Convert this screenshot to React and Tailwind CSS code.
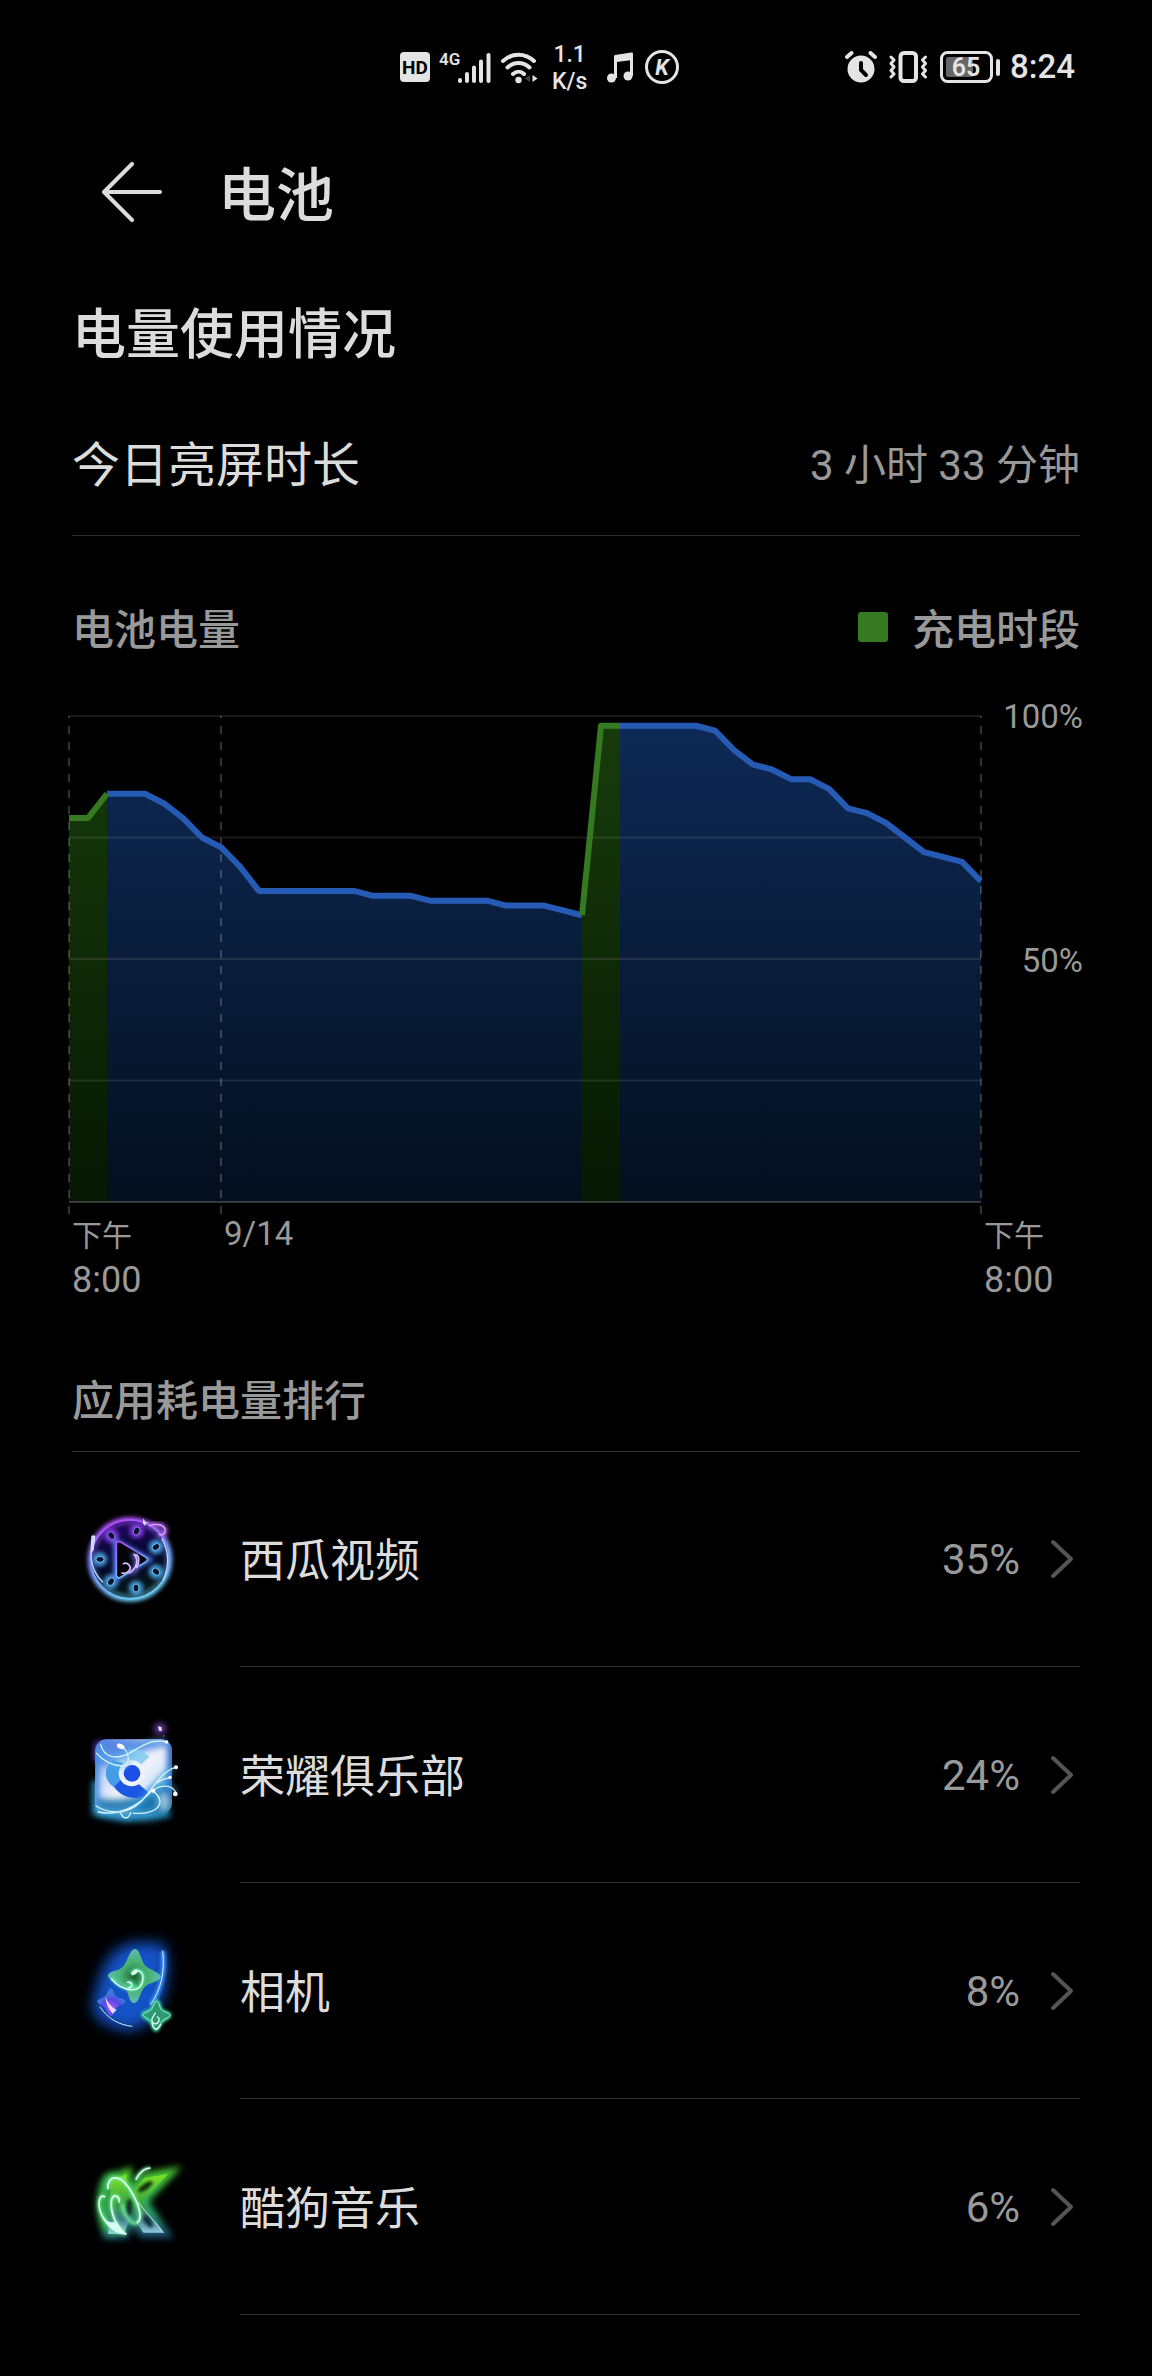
import { useId } from 'react'

// Battery level sampled every 30 minutes, 8pm to 8pm
const levels = [
  79, 79, 84, 84, 84, 82, 79, 75, 73, 69, 64, 64, 64, 64, 64, 64, 63, 63, 63, 62, 62, 62, 62, 61, 61, 61, 60, 59,
  98, 98, 98, 98, 98, 98, 97, 93, 90, 89, 87, 87, 85, 81, 80, 78, 75, 72, 71, 70, 66
]

const segments = [
  { from: 2, to: 27, charging: false },
  { from: 29, to: 48, charging: false },
  { from: 0, to: 2, charging: true },
  { from: 27, to: 29, charging: true }
]

const STEP = 19
const PLOT_HEIGHT = 486

const px = (i) => 1 + i * STEP
const py = (level) => 1 + ((100 - level) * PLOT_HEIGHT) / 100

function linePoints({ from, to }) {
  return levels
    .slice(from, to + 1)
    .map((level, i) => `${px(from + i)},${py(level)}`)
    .join(' ')
}

function areaPoints(segment) {
  return `${px(segment.from)},${py(0)} ${linePoints(segment)} ${px(segment.to)},${py(0)}`
}

function BatteryChart() {
  return (
    <svg viewBox="0 0 914 499" className="block w-full" role="img" aria-label="电池电量">
      <defs>
        <linearGradient id="usage" gradientUnits="userSpaceOnUse" x1="0" y1="0" x2="0" y2="487">
          <stop offset="0" stopColor="#0e2a57" />
          <stop offset="1" stopColor="#040f1e" />
        </linearGradient>
        <linearGradient id="charge" gradientUnits="userSpaceOnUse" x1="0" y1="0" x2="0" y2="487">
          <stop offset="0" stopColor="#183c0b" />
          <stop offset="1" stopColor="#061803" />
        </linearGradient>
      </defs>
      {segments.map((s) => (
        <polygon key={s.from} points={areaPoints(s)} fill={s.charging ? 'url(#charge)' : 'url(#usage)'} />
      ))}
      {[100, 75, 50, 25].map((level) => (
        <line key={level} x1="1" x2="913" y1={py(level)} y2={py(level)} stroke="#fff" strokeOpacity="0.1" strokeWidth="2" />
      ))}
      <line x1="1" x2="913" y1={py(0)} y2={py(0)} stroke="#fff" strokeOpacity="0.2" strokeWidth="2" />
      {[0, 8, 48].map((i) => (
        <line
          key={i}
          x1={px(i)}
          x2={px(i)}
          y1="1"
          y2="499"
          stroke="#fff"
          strokeOpacity="0.2"
          strokeWidth="2"
          strokeDasharray="8 8"
          strokeDashoffset="6"
        />
      ))}
      {segments.map((s) => (
        <polyline
          key={s.from}
          points={linePoints(s)}
          fill="none"
          stroke={s.charging ? '#357a20' : '#255bb5'}
          strokeWidth="6"
          strokeLinejoin="round"
        />
      ))}
    </svg>
  )
}

function StatusBar() {
  return (
    <div className="flex h-[134px] items-center justify-between pr-[77px] pl-[400px] text-[#e4e4e4]">
      <div className="flex items-center">
        <svg width="30" height="30" viewBox="0 0 30 30">
          <rect width="30" height="30" rx="4" fill="currentColor" />
          <text x="15" y="22" textAnchor="middle" fontSize="19" fontWeight="700" fill="#000">HD</text>
        </svg>
        <svg className="ml-[9px]" width="52" height="34" viewBox="0 0 52 34" fill="none" stroke="currentColor">
          <text x="0" y="15" fontSize="17" fontWeight="600" fill="currentColor" stroke="none">4G</text>
          <path d="M21 30v1M28 24v7M35 17.500v13.500M42 11.500v19.500M49.500 5v26" strokeWidth="4" strokeLinecap="round" />
        </svg>
        <svg className="ml-[9px]" width="38" height="34" viewBox="0 0 38 34" fill="none" stroke="currentColor">
          <path d="M3 11c9-8.500 22-8.500 31 0M7.500 17.500c6.500-6 15.500-6 22 0M13 24c3.500-3 8-3 11 0" strokeWidth="4" strokeLinecap="round" />
          <circle cx="18.500" cy="30" r="3.200" fill="currentColor" stroke="none" />
          <path d="M30 25v7l-5-3.500z" fill="#444" stroke="none" />
          <path d="M32.500 25v7l5-3.500z" fill="currentColor" stroke="none" />
        </svg>
        <div className="ml-[14px] pt-[2px] text-center text-[23px] leading-[27px] font-medium">
          1.1
          <br />
          K/s
        </div>
        <svg className="ml-[19px]" width="28" height="32" viewBox="0 0 28 32" fill="none" stroke="currentColor">
          <path d="M9.500 27V5.500L25.500 3v22" strokeWidth="3" strokeLinejoin="round" />
          <path d="M9.500 5.500L25.500 3v5L9.500 10z" fill="currentColor" strokeWidth="2" />
          <circle cx="5.500" cy="27" r="4.500" fill="currentColor" stroke="none" />
          <circle cx="22" cy="25" r="4.500" fill="currentColor" stroke="none" />
        </svg>
        <svg className="ml-[11px]" width="34" height="34" viewBox="0 0 34 34">
          <circle cx="17" cy="17" r="15.500" fill="none" stroke="currentColor" strokeWidth="3" />
          <text x="17" y="25" textAnchor="middle" fontSize="22" fontWeight="700" fontStyle="italic" fill="currentColor">K</text>
        </svg>
      </div>
      <div className="flex items-center">
        <svg width="32" height="32" viewBox="0 0 32 32" fill="none" strokeLinecap="round">
          <circle cx="16" cy="18" r="13.500" fill="currentColor" />
          <path d="M2 6l4.500-4M30 6l-4.500-4" stroke="currentColor" strokeWidth="4" />
          <path d="M16 12v7l5 5" stroke="#000" strokeWidth="4" />
        </svg>
        <svg className="ml-[12px]" width="38" height="32" viewBox="0 0 38 32" fill="none" stroke="currentColor">
          <rect x="11.500" y="2" width="15.500" height="28" rx="3.500" strokeWidth="4" />
          <path d="M2 6l3 3-3 3.500 3 3.500-3 3.500 3 3.500-3 3M36.500 6l-3 3 3 3.500-3 3.500 3 3.500-3 3.500 3 3" strokeWidth="3" strokeLinecap="round" strokeLinejoin="round" />
        </svg>
        <svg className="ml-[13px]" width="61" height="32" viewBox="0 0 61 32">
          <rect x="1.500" y="1.500" width="50" height="29" rx="6" fill="none" stroke="currentColor" strokeWidth="3" />
          <rect x="6" y="6" width="27" height="20" rx="2" fill="#666" />
          <rect x="56" y="8" width="4" height="17" rx="2" fill="currentColor" />
          <text x="26" y="25" textAnchor="middle" fontSize="25" fontWeight="600" fill="currentColor">65</text>
        </svg>
        <span className="ml-[9px] text-[33px] leading-[40px] font-medium">8:24</span>
      </div>
    </div>
  )
}

function VideoIcon() {
  const id = useId()
  const holes = [[200, 96, 20], [124, 110, -35], [90, 181, 90], [123, 248, 35], [198, 267, 0], [258, 218, -50], [258, 144, 55]]
  return (
    <svg viewBox="6 0 360 360" className="size-[120px]" fill="none" aria-hidden="true">
      <defs>
        <linearGradient id={`${id}-ring`} x1="0.3" y1="0" x2="0.6" y2="1">
          <stop offset="0" stopColor="#b04af5" />
          <stop offset="0.45" stopColor="#7d8cf8" />
          <stop offset="1" stopColor="#6accf2" />
        </linearGradient>
        <linearGradient id={`${id}-disc`} x1="0.4" y1="0" x2="0.6" y2="1">
          <stop offset="0" stopColor="#210760" />
          <stop offset="0.5" stopColor="#04062a" />
          <stop offset="1" stopColor="#071d14" />
        </linearGradient>
        <filter id={`${id}-glow`} x="-30%" y="-30%" width="160%" height="160%">
          <feGaussianBlur stdDeviation="7" />
        </filter>
      </defs>
      <g stroke={`url(#${id}-ring)`}>
        <circle cx="180" cy="181" r="118" strokeWidth="18" filter={`url(#${id}-glow)`} />
        <circle cx="180" cy="181" r="118" strokeWidth="6" fill={`url(#${id}-disc)`} />
        <circle cx="180" cy="181" r="112" strokeWidth="10" opacity="0.6" filter={`url(#${id}-glow)`} />
      </g>
      <g filter={`url(#${id}-glow)`} strokeWidth="14">
        {holes.map(([x, y]) => (
          <circle key={x + y} cx={x} cy={y} r="14" stroke={y < 130 && x < 220 ? '#8a40f0' : '#4cabf0'} />
        ))}
        <path d="M140 132l92 50-92 52z" stroke="#527af5" strokeWidth="20" />
      </g>
      {holes.map(([x, y, r]) => (
        <ellipse
          key={x + y}
          cx={x}
          cy={y}
          rx="9"
          ry="12"
          transform={`rotate(${r} ${x} ${y})`}
          fill="#06142e"
          stroke={y < 130 && x < 220 ? '#9a62f0' : '#6dc0f2'}
          strokeWidth="3"
        />
      ))}
      <path d="M139 136c0-8 8-10 14-6l75 45c6 4 6 9 0 13l-76 47c-7 4-13 0-13-7z" fill="#030208" stroke={`url(#${id}-ring)`} strokeWidth="5" strokeLinejoin="round" />
      <path d="M182 220c25-8 20-35 8-60" stroke="#4a449c" strokeWidth="20" filter={`url(#${id}-glow)`} />
      <path d="M192 166c14 14 10 42-14 56M160 194c14-6 26 10 18 20s-16 10-22 8M196 168c12-2 14 22 4 38" stroke="#d9bcff" strokeWidth="5" strokeLinecap="round" />
      <path d="M238 80c18-8 46-4 48 14 0 12-12 16-18 12" stroke="#b45df2" strokeWidth="14" filter={`url(#${id}-glow)`} />
      <path d="M238 80c18-8 46-4 48 14 0 12-12 16-18 12" stroke="#d8a5ff" strokeWidth="4" strokeLinecap="round" />
      <path d="M220 58l6 11 10 2-10 3 1 8-8-8zM64 112q6-6 12 0l-5 42-10 10z" fill="#eadcff" />
      <path d="M69 116l-6 60q6 48 36 74M275 118q34 60 4 126" stroke="#b9d8ff" strokeWidth="4" />
    </svg>
  )
}

function ClubIcon() {
  const id = useId()
  const swirls = 'M80 118c20 24 50 38 76 38s26-46-6-60M92 92c10 40 50 50 100 18s70-32 100-26M78 276c50 30 110 24 150-30s60-78 88-86M84 294c60 14 120-20 150-52s70-34 84-6M152 298c12 22 24 14 30-2M250 232c40 30 20 70-60 66M262 206c16-14 24-10 40-16'
  return (
    <svg viewBox="6 3 360 360" className="size-[120px]" fill="none" aria-hidden="true">
      <defs>
        <linearGradient id={`${id}-tile`} x1="0" y1="0" x2="1" y2="1">
          <stop offset="0" stopColor="#5c7fe0" />
          <stop offset="0.3" stopColor="#c6d6f6" />
          <stop offset="0.5" stopColor="#eef1fa" />
          <stop offset="0.64" stopColor="#dde8f8" />
          <stop offset="0.76" stopColor="#5fa0cc" />
          <stop offset="1" stopColor="#2f7c98" />
        </linearGradient>
        <filter id={`${id}-glow`} filterUnits="userSpaceOnUse" x="0" y="0" width="366" height="366">
          <feGaussianBlur stdDeviation="10" />
        </filter>
        <clipPath id={`${id}-clip`}>
          <rect x="76" y="76" width="230" height="224" rx="34" />
        </clipPath>
      </defs>
      <path d="M84 200v90q100 30 214 0" stroke="#2590c4" strokeWidth="34" filter={`url(#${id}-glow)`} />
      <path d="M90 84v60" stroke="#6a35d8" strokeWidth="30" filter={`url(#${id}-glow)`} />
      <rect x="76" y="76" width="230" height="224" rx="34" fill={`url(#${id}-tile)`} />
      <g clipPath={`url(#${id}-clip)`}>
        <path d="M76 76h230v20q-120 10-200 60l-30-10z" fill="#4a7ce0" opacity="0.8" filter={`url(#${id}-glow)`} />
        <path d="M76 300V250q100 30 230-50v100z" fill="#196ea8" opacity="0.9" filter={`url(#${id}-glow)`} />
        <path d="M306 84v180" stroke="#1f5cc8" strokeWidth="26" filter={`url(#${id}-glow)`} />
        <path d="M76 110v170" stroke="#3a86dc" strokeWidth="22" filter={`url(#${id}-glow)`} />
        <ellipse cx="282" cy="262" rx="16" ry="30" fill="#c7dde2" opacity="0.8" filter={`url(#${id}-glow)`} />
      </g>
      <path d="M216 110l22 18-32 30-22-10-8-40c16-4 28-2 40 2z" fill="#90cdf0" />
      <path d="M128 138c-30 26-26 62 4 82l28-28c-6-16-2-30 8-42z" fill="#459be6" />
      <path d="M132 218l28-28 46 20 30 26c-26 26-78 20-104-18z" fill="#1b57e2" />
      <circle cx="185" cy="178" r="39" fill="#eef2fc" />
      <circle cx="186" cy="178" r="25" fill="#1b4fe6" />
      <path d={swirls} stroke="#4db4ec" strokeWidth="10" opacity="0.8" filter={`url(#${id}-glow)`} />
      <path d={swirls} stroke="#d4f1ff" strokeWidth="4" strokeLinecap="round" />
      <g fill="#fff">
        <circle cx="318" cy="160" r="6" />
        <circle cx="316" cy="240" r="7" />
        <circle cx="300" cy="190" r="5" />
        <circle cx="250" cy="230" r="6" />
        <circle cx="290" cy="84" r="5" />
        <ellipse cx="152" cy="97" rx="12" ry="7" transform="rotate(25 152 97)" />
      </g>
      <circle cx="270" cy="44" r="17" fill="#6f3fb0" filter={`url(#${id}-glow)`} />
      <path d="M264 37l10 2 2 12-9-1z" fill="#f1dcff" />
      <circle cx="281" cy="66" r="2" fill="#a68cff" />
    </svg>
  )
}

function CameraIcon() {
  const id = useId()
  return (
    <svg viewBox="6 6 360 360" className="size-[120px]" fill="none" aria-hidden="true">
      <defs>
        <radialGradient id={`${id}-green`}>
          <stop offset="0" stopColor="#1a6234" />
          <stop offset="0.5" stopColor="#48b070" />
          <stop offset="1" stopColor="#5fbcb4" />
        </radialGradient>
        <radialGradient id={`${id}-violet`} cx="0.5" cy="0.7">
          <stop offset="0" stopColor="#a35ef0" />
          <stop offset="0.6" stopColor="#5b45e6" />
          <stop offset="1" stopColor="#3f78dc" />
        </radialGradient>
        <filter id={`${id}-glow`} filterUnits="userSpaceOnUse" x="0" y="0" width="372" height="372">
          <feGaussianBlur stdDeviation="20" />
        </filter>
        <filter id={`${id}-soft`} x="-40%" y="-40%" width="180%" height="180%">
          <feGaussianBlur stdDeviation="5" />
        </filter>
      </defs>
      <path d="M284 46c26 110-10 230-90 256-50 4-116-20-128-66 20-80 30-156 96-186 40-14 80-12 122-4z" fill="#175bdc" opacity="0.9" filter={`url(#${id}-glow)`} />
      <path d="M278 66c8 60-6 120-36 160" stroke="#378bf5" strokeWidth="16" filter={`url(#${id}-soft)`} />
      <path d="M278 66c8 60-6 120-36 160M90 234c24 36 58 54 96 58" stroke="#cdeeff" strokeWidth="3" strokeLinecap="round" />
      <path d="M194 60c-16 2-22 40-36 54s-44 12-44 26 34 18 48 32 14 50 30 50 18-34 32-48 48-16 48-30-34-22-46-34-16-52-32-50z" fill={`url(#${id}-green)`} />
      <path d="M124 146c30 40 92 50 96 2 2-26-26-34-36-14M178 180c14-2 14-22-6-20" stroke="#63efac" strokeWidth="9" filter={`url(#${id}-soft)`} />
      <path d="M124 150c34 38 90 48 95 0 2-24-20-34-34-16M176 176c14-2 12-18-4-16" stroke="#dcfff0" strokeWidth="4" strokeLinecap="round" />
      <ellipse cx="194" cy="130" rx="11" ry="6" transform="rotate(-40 194 130)" fill="#dcfff0" />
      <path d="M122 178c-8 0-10 22-18 26s-24 8-22 14 18 12 24 20 10 26 18 24 10-22 18-28 26-10 24-18-20-6-28-14-8-24-16-24z" fill={`url(#${id}-violet)`} />
      <path d="M106 200c2 24 8 36 22 54l12-12c-16-8-28-22-34-42z" fill="#eed6ff" />
      <path d="M260 216c-8 0-10 20-18 26s-26 8-24 16 18 12 24 20 8 26 16 26 12-20 18-26 26-12 24-20-20-8-26-16-6-26-14-26z" fill="#1c8c66" stroke="#3fe6a0" strokeWidth="9" filter={`url(#${id}-soft)`} />
      <path d="M260 218c-8 0-10 20-18 26s-24 8-22 14 18 12 24 20 8 24 14 24 12-18 18-26 26-10 24-18-20-8-26-16-6-24-14-24z" fill="#2d9872" stroke="#8ff0c8" strokeWidth="3" />
      <path d="M262 264c14 6-2 28-12 18s-2-16 6-30M246 284c6 20 16 22 26 2" stroke="#e2fff4" strokeWidth="4" strokeLinecap="round" />
    </svg>
  )
}

function MusicIcon() {
  const id = useId()
  const letter = 'M122 110l48-20v74l54-62 70-12-78 82 66 94h-62l-36-56-22 60h-48z'
  return (
    <svg viewBox="6 9 360 360" className="size-[120px]" fill="none" aria-hidden="true">
      <defs>
        <linearGradient id={`${id}-body`} x1="0.5" y1="0" x2="0.5" y2="1">
          <stop offset="0" stopColor="#7fe626" />
          <stop offset="0.5" stopColor="#38a044" />
          <stop offset="0.75" stopColor="#3a7c84" />
          <stop offset="1" stopColor="#9acfe8" />
        </linearGradient>
        <linearGradient id={`${id}-aura`} x1="0.5" y1="0" x2="0.5" y2="1">
          <stop offset="0" stopColor="#48cc34" />
          <stop offset="0.6" stopColor="#2cb068" />
          <stop offset="1" stopColor="#1f5274" />
        </linearGradient>
        <filter id={`${id}-glow`} filterUnits="userSpaceOnUse" x="0" y="0" width="372" height="372">
          <feGaussianBlur stdDeviation="11" />
        </filter>
        <filter id={`${id}-soft`} x="-40%" y="-40%" width="180%" height="180%">
          <feGaussianBlur stdDeviation="5" />
        </filter>
      </defs>
      <path d={letter} fill={`url(#${id}-aura)`} stroke={`url(#${id}-aura)`} strokeWidth="30" filter={`url(#${id}-glow)`} />
      <ellipse cx="126" cy="180" rx="34" ry="84" fill="#2f9a50" stroke="#35b84c" strokeWidth="20" filter={`url(#${id}-glow)`} />
      <path d={letter} fill={`url(#${id}-body)`} />
      <ellipse cx="226" cy="128" rx="26" ry="9" transform="rotate(-35 226 128)" fill="#0b2e08" filter={`url(#${id}-soft)`} />
      <ellipse cx="178" cy="190" rx="9" ry="26" fill="#0c3323" filter={`url(#${id}-soft)`} />
      <ellipse cx="234" cy="232" rx="9" ry="22" transform="rotate(-35 234 232)" fill="#0d2c36" filter={`url(#${id}-soft)`} />
      <path d="M114 134c-2-44 38-40 60-6s50 90 28 108c-20 12-48-36-44-58M104 158c-20-12-24 36-2 66s36 42 66 46M148 174c0-22-22-26-24-2s6 68 42 98M198 106q18-34 42-34" stroke="#7df5a0" strokeWidth="11" opacity="0.8" filter={`url(#${id}-soft)`} />
      <path d="M114 134c-2-44 36-40 60-6s50 90 28 108M104 158c-20-12-24 36-2 66s36 42 66 46M148 174c0-22-22-26-24-2s6 68 42 98M198 106q18-34 42-34" stroke="#dcfff0" strokeWidth="5" strokeLinecap="round" />
      <path d="M94 212c12 24 36 26 46 20 8 14 16 26 30 38-34-2-62-20-76-58z" fill="#d7fff4" />
      <path d="M202 172l78 94" stroke="#b8f0e0" strokeWidth="3" />
    </svg>
  )
}

const apps = [
  { name: '西瓜视频', usage: '35%', Icon: VideoIcon },
  { name: '荣耀俱乐部', usage: '24%', Icon: ClubIcon },
  { name: '相机', usage: '8%', Icon: CameraIcon },
  { name: '酷狗音乐', usage: '6%', Icon: MusicIcon }
]

function AppRow({ name, usage, Icon }) {
  return (
    <li>
      <a href="#" className="flex items-stretch">
        <span className="flex w-[168px] items-center">
          <Icon />
        </span>
        <span className="flex h-[216px] flex-1 items-center border-b border-[#303030]">
          <span className="flex-1 pt-[6px] text-[45px] leading-[60px] text-[#dcdcdc]">{name}</span>
          <span className="pt-[2px] text-[42px] leading-[56px] text-[#999]">{usage}</span>
          <svg className="mr-[6px] ml-[30px]" width="24" height="40" viewBox="0 0 24 40" fill="none" aria-hidden="true">
            <path d="M3 3l18 17L3 37" stroke="#555" strokeWidth="4" strokeLinecap="round" strokeLinejoin="round" />
          </svg>
        </span>
      </a>
    </li>
  )
}

export default function App() {
  return (
    <div className="min-h-screen bg-black font-[Roboto,'Noto_Sans_CJK_SC',sans-serif] text-[#dcdcdc]">
      <StatusBar />

      <header className="flex h-[116px] items-center px-[102px]">
        <button type="button" aria-label="返回">
          <svg width="60" height="60" viewBox="0 0 60 60" fill="none" stroke="currentColor" strokeWidth="4" strokeLinecap="round" strokeLinejoin="round">
            <path d="M30 2L2 30l28 28M2 30h56" />
          </svg>
        </button>
        <h1 className="ml-[56px] pt-[8px] text-[58px] leading-[76px] font-medium">电池</h1>
      </header>

      <main>
        <section className="px-[72px]">
          <h2 className="flex h-[143px] items-center pt-[28px] text-[54px] leading-[72px] font-medium">电量使用情况</h2>
          <div className="flex h-[143px] items-center justify-between border-b border-[#303030] pt-[4px]">
            <span className="text-[48px] leading-[64px]">今日亮屏时长</span>
            <span className="text-[42px] leading-[56px] text-[#999]">3 小时 33 分钟</span>
          </div>
          <div className="flex h-[179px] items-center justify-between pt-[10px] text-[42px] leading-[56px] font-medium text-[#999]">
            <h3>电池电量</h3>
            <div className="flex items-start">
              <span className="mt-[9px] mr-[24px] size-[30px] rounded-[3px] bg-[#357a20]" />
              充电时段
            </div>
          </div>
        </section>

        <section className="pr-[69px] pl-[68px] text-[#999]">
          <div className="flex">
            <div className="flex-1">
              <BatteryChart />
            </div>
            <div className="flex w-[101px] flex-col pb-[12px] text-right text-[33px] leading-[42px]">
              <div className="flex-1">
                <span className="-mt-[19px] block">100%</span>
              </div>
              <div className="flex-1">
                <span className="-mt-[19px] block">50%</span>
              </div>
            </div>
          </div>
          <div className="grid grid-cols-[152fr_762fr_101px] text-[36px] leading-[45px]">
            <div className="pl-[4px]">
              <span className="block text-[30px] leading-[44px]">下午</span>
              8:00
            </div>
            <div className="pl-[4px] text-[33px] leading-[40px]">9/14</div>
            <div className="pl-[2px]">
              <span className="block text-[30px] leading-[44px]">下午</span>
              8:00
            </div>
          </div>
        </section>

        <section className="px-[72px]">
          <h3 className="flex h-[149px] items-end border-b border-[#303030] pb-[21px] text-[42px] leading-[56px] font-medium text-[#999]">
            应用耗电量排行
          </h3>
          <ul className="-mt-px">
            {apps.map((app) => (
              <AppRow key={app.name} {...app} />
            ))}
          </ul>
        </section>
      </main>
    </div>
  )
}
